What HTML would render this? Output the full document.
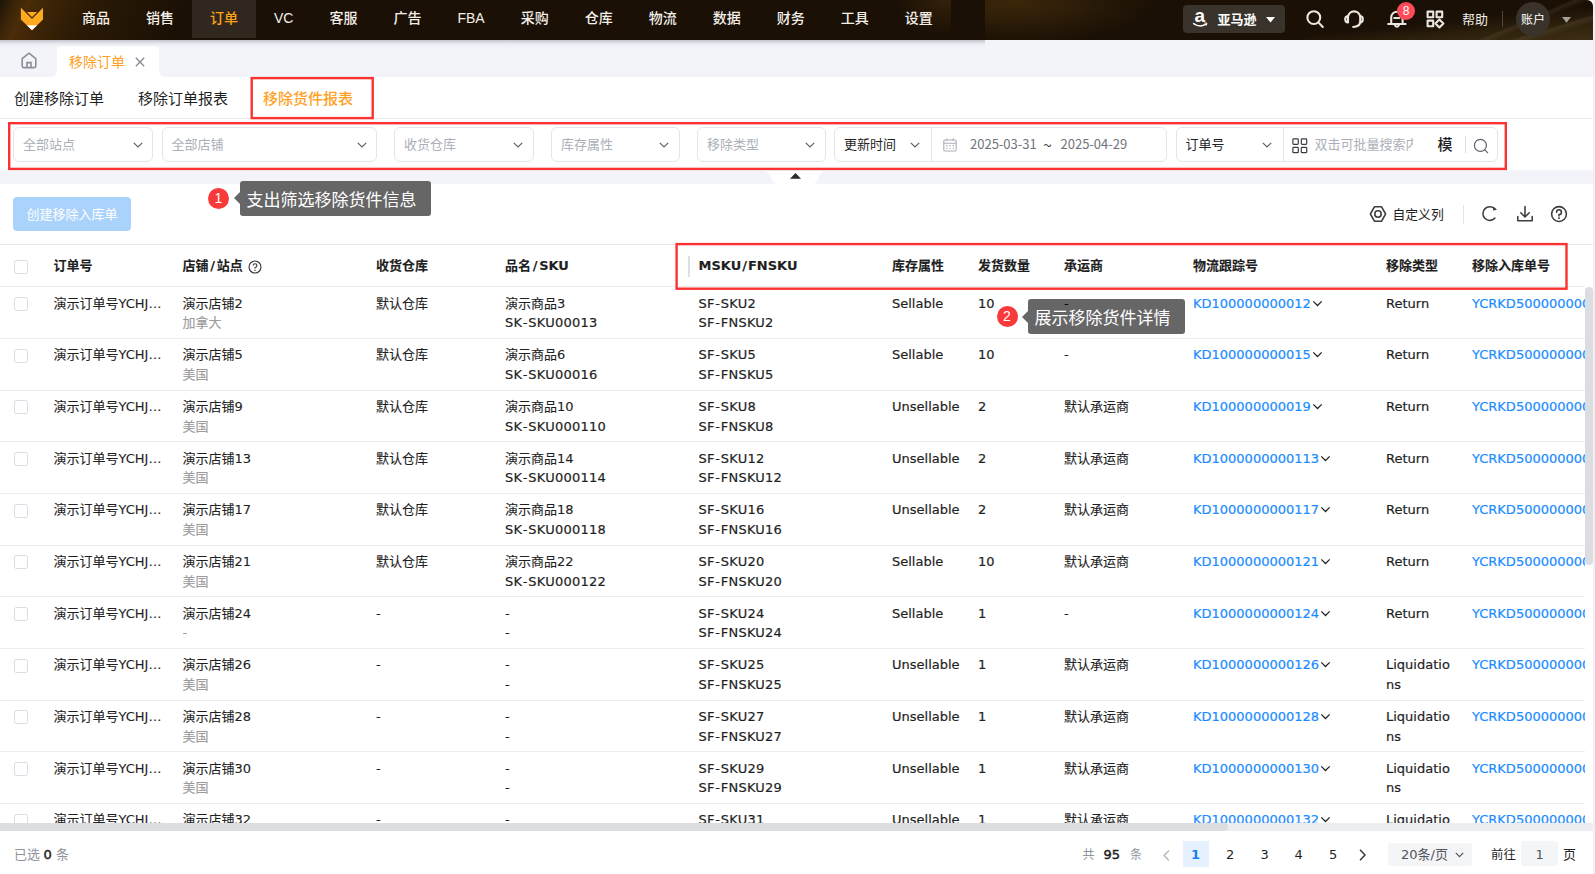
<!DOCTYPE html>
<html lang="zh-CN">
<head>
<meta charset="utf-8">
<title>移除订单</title>
<style>
*{box-sizing:border-box;margin:0;padding:0}
html,body{width:1595px;height:874px;overflow:hidden;background:#f0f1f5}
body{position:relative;font-family:"Liberation Sans","Noto Sans CJK SC",sans-serif;font-size:13px;color:#1f1f1f}
#page{position:absolute;left:0;top:0;width:1593px;height:874px;background:#fff;overflow:hidden}
svg{display:block;position:absolute;overflow:visible}
/* header */
#hdr{position:absolute;left:0;top:0;width:1593px;height:40px;background:#1a1005;overflow:hidden;border-radius:0 6px 0 0}
#hdr .glowL{position:absolute;left:0;top:0;width:300px;height:40px;background:linear-gradient(115deg,#1c1409 0%,#3a2408 5%,#4a2d08 9%,#3c2406 16%,#2a1905 30%,#1a1005 60%)}
#hdr .glowM{position:absolute;left:985px;top:0;width:230px;height:40px;background:radial-gradient(ellipse 140px 42px at 28px 2px,#3c2609 0%,#311f09 35%,rgba(26,16,5,0) 100%)}
#hdr .glowN{position:absolute;left:880px;top:0;width:71px;height:40px;background:radial-gradient(ellipse 50px 36px at 66px 0,#33210a 0%,rgba(26,16,5,0) 100%)}
#hdr .glowR{position:absolute;left:1300px;top:0;width:293px;height:40px;background:linear-gradient(157deg,rgba(0,0,0,0) 70%,rgba(120,100,70,.22) 71.5%,rgba(0,0,0,0) 75%),linear-gradient(163deg,rgba(0,0,0,0) 80%,rgba(120,100,70,.25) 82%,rgba(0,0,0,0) 87%),linear-gradient(174deg,rgba(26,16,5,0) 52%,#2e210d 74%,#3d2e15 100%)}
#nav{position:absolute;left:64px;top:0;height:40px;display:flex;font-size:14px;font-weight:500;color:#f3efe9;width:921px}
#nav span{display:block;height:38px;line-height:37px;padding:0 18px;white-space:nowrap}
#nav span.on{background:#30281e;color:#ffa21a}
#navshadow{position:absolute;left:0;top:40px;width:985px;height:7px;background:linear-gradient(#c3c6ce,rgba(226,229,235,.6) 55%,rgba(236,238,243,0));border-radius:0 0 4px 0}
.hi{stroke:#ebe7e1;fill:none;stroke-width:2.1;stroke-linecap:round;stroke-linejoin:round}
#amz{position:absolute;left:1183px;top:5px;width:102px;height:28px;background:#3a332b;border-radius:4px;color:#fff;font-weight:500;font-size:13px;line-height:27px}
#amz b{position:absolute;left:34.5px;top:0;font-family:"Noto Sans CJK SC",sans-serif}
#badge{position:absolute;left:1397px;top:1.5px;width:18px;height:18px;border-radius:9px;background:#ff4b59;color:#fff;font-size:12px;line-height:18px;text-align:center}
#help{position:absolute;left:1462px;top:10px;font-size:13px;line-height:18px;color:#f0ece6;font-family:"Noto Sans CJK SC",sans-serif}
#hdiv{position:absolute;left:1502px;top:11px;width:1px;height:16px;background:#4d463d}
#avatar{position:absolute;left:1516px;top:2px;width:34px;height:34px;border-radius:17px;background:#3a332c;color:#fff;font-size:12px;line-height:34px;text-align:center;font-family:"Noto Sans CJK SC",sans-serif}
/* tab bar */
#tabbar{position:absolute;left:0;top:40px;width:1593px;height:37px;background:#f2f4f9}
#homebg{display:none}
#tab1:before,#tab1:after{content:"";position:absolute;bottom:0;width:6px;height:6px;background:radial-gradient(circle 6px at 0 0,#f2f4f9 5.6px,#fff 6.2px)}
#tab1:before{left:-6px}
#tab1:after{right:-6px;background:radial-gradient(circle 6px at 6px 0,#f2f4f9 5.6px,#fff 6.2px)}
#tab1{position:absolute;left:57px;top:6px;width:102px;height:31px;background:#fff;border-radius:5px 5px 0 0;color:#ffa126;font-size:14px;line-height:30px;padding-left:12px;font-family:"Noto Sans CJK SC",sans-serif}
/* sub tabs */
#subtabs{position:absolute;left:0;top:77px;width:1593px;height:42px;background:#fff;border-bottom:1px solid #ebedf1;font-size:15px;font-family:"Noto Sans CJK SC",sans-serif}
#subtabs span{position:absolute;top:0;line-height:41px;white-space:nowrap;color:#1f1f1f}
.redbox{position:absolute;border:2px solid #fa2d2d;pointer-events:none}
/* filter */
#filter{position:absolute;left:0;top:119px;width:1593px;height:51px;background:#fff;font-family:"Noto Sans CJK SC",sans-serif}
.sel{position:absolute;top:8px;height:35px;border:1px solid #e2e5eb;border-radius:6px;background:#fff;font-size:13px;line-height:32px;padding-left:9px;color:#abafb7;white-space:nowrap}
.sel.dk{color:#1f1f1f}
.sel svg.cv{top:13.5px;width:10px;height:6px}
.sel .dv{position:absolute;top:0;width:1px;height:33px;background:#e2e5eb}
#strip{position:absolute;left:0;top:170px;width:1593px;height:14px;background:#f2f4f9}
#trig{position:absolute;left:764px;top:1px;width:62px;height:13px}
/* toolbar */
#btn{position:absolute;left:13px;top:197px;width:118px;height:34px;border-radius:4px;background:#a9d3fb;color:#fff;font-size:13px;line-height:33px;text-align:center;font-family:"Noto Sans CJK SC",sans-serif}
.ti{stroke:#3d3d3d;fill:none;stroke-width:1.55;stroke-linecap:round;stroke-linejoin:round}
.anno{position:absolute;width:21px;height:21px;border-radius:11px;background:#f93a3a;color:#fff;font-size:14px;line-height:21px;text-align:center}
.tip{position:absolute;height:35px;background:#666;border-radius:3px;color:#fff;font-size:17px;line-height:35px;padding-left:6.4px;white-space:nowrap;font-family:"Noto Sans CJK SC",sans-serif}
.tip:before{content:"";position:absolute;left:-6px;top:11.5px;border:6px solid transparent;border-left-width:0;border-right-color:#666}
/* table */
#tbl{position:absolute;left:0;top:244px;width:1585px;height:579px;overflow:hidden;border-top:1px solid #e6e8ee;font-family:"DejaVu Sans","Noto Sans CJK SC",sans-serif;font-size:13px;background:#fff}
.row{position:absolute;left:0;width:1585px;height:51.67px;border-top:1px solid #ebedf0}
.row.h{height:41px;font-weight:bold;top:0;border-top:0}
.c{position:absolute;top:6.4px;line-height:19.5px;white-space:nowrap;-webkit-text-stroke:.12px currentColor}
.row.h .c{top:11.4px}
u{text-decoration:none;padding:0 1.7px}
u.n{padding:0 1px}
s{text-decoration:none;padding:0 .6px}
.la{-webkit-text-stroke:.2px currentColor}
.sk{letter-spacing:.22px}
.el{overflow:hidden;text-overflow:ellipsis}
.wr{white-space:normal;word-break:break-all}
.g{color:#9b9b9b}
.lk{color:#1a8cff}
.cb{position:absolute;left:14px;width:14px;height:14px;border:1.5px solid #d9dce4;border-radius:2.5px;background:#fff}
svg.tc{position:static;display:inline-block;width:11px;height:7px;margin-left:1px;vertical-align:1px}
/* footer */
#hsb{position:absolute;left:0;top:823px;width:1593px;height:8px;background:#eceef2}
#hsb i{position:absolute;left:0;top:0;width:1228px;height:8px;border-radius:0 4px 4px 0;background:#dcdde1}
#vsb{position:absolute;left:1585px;top:287px;width:8px;height:278px;border-radius:4px;background:#dcdde1}
#foot{position:absolute;left:0;top:831px;width:1593px;height:43px;background:#fff;font-family:"DejaVu Sans","Noto Sans CJK SC",sans-serif;font-size:13px}
#foot span{position:absolute;top:14px;line-height:20px;white-space:nowrap}
.gy{color:#8f939b}
.bd{-webkit-text-stroke:.45px currentColor}
</style>
</head>
<body>
<div id="page">
<div id="hdr">
<div class="glowL"></div><div class="glowM"></div><div class="glowN"></div><div class="glowR"></div>
<svg style="left:0;top:0" width="64" height="40" viewBox="0 0 64 40"><polygon points="20.9,7.8 32,19.1 43,7.8 43,19.4 32,30.2 20.9,19.4" fill="#ffa921"/><polygon points="27,12.1 37,12.1 32,17.2" fill="#ffa921"/><polygon points="26.9,25.3 37.1,25.3 32,30.3" fill="#fff"/></svg>
<div id="nav"><span>商品</span><span>销售</span><span class="on">订单</span><span>VC</span><span>客服</span><span>广告</span><span>FBA</span><span>采购</span><span>仓库</span><span>物流</span><span>数据</span><span>财务</span><span>工具</span><span>设置</span></div>
<div id="amz"><svg style="left:10px;top:4px" width="16" height="20" viewBox="0 0 16 20"><text x="1.4" y="12.7" font-family="Liberation Sans,sans-serif" font-weight="bold" font-size="19" fill="#fff">a</text><path d="M0.6 14.6 Q6.6 18.8 12.6 15.4" stroke="#fff" stroke-width="1.5" fill="none" stroke-linecap="round"/><path d="M11.4 14 L14 14.2 L13.2 16.6" stroke="#fff" stroke-width="1" fill="none"/></svg><b>亚马逊</b><svg style="left:83px;top:11.5px" width="9" height="6" viewBox="0 0 9 6"><polygon points="0,0 9,0 4.5,5.6" fill="#fff"/></svg></div>
<svg style="left:1300px;top:5.5px" width="30" height="28" viewBox="0 0 30 28"><circle class="hi" cx="13.8" cy="11.6" r="6.4"/><path class="hi" d="M18.6 16.6 L22.8 21"/></svg>
<svg style="left:1340px;top:6px" width="30" height="28" viewBox="0 0 30 28"><path class="hi" d="M8 10.5 A6.2 6.2 0 0 1 20.2 10.5 L20.2 16 Q19.6 20.6 13.2 21"/><path class="hi" d="M8 10 Q5.2 10.4 5.2 13.2 Q5.2 16.2 8 16.4 Z"/><path class="hi" d="M20.2 10 Q22.8 10.4 22.8 13.2 Q22.8 16.2 20.2 16.4"/></svg>
<svg style="left:1383px;top:6px" width="30" height="28" viewBox="0 0 30 28"><path class="hi" d="M5.2 18 L22.6 18 M8.2 18 L8.2 11.4 A5.7 5.7 0 0 1 19.6 11.4 L19.6 18 M11.2 12 L16.4 12"/><path class="hi" d="M11.8 19 Q13.9 22.6 16 19"/></svg>
<div id="badge">8</div>
<svg style="left:1426px;top:10px" width="19" height="19" viewBox="0 0 19 19"><rect class="hi" x="1.6" y="1.6" width="5.6" height="5.6"/><rect class="hi" x="10.6" y="1.6" width="5.6" height="5.6"/><rect class="hi" x="1.6" y="10.6" width="5.6" height="5.6"/><path class="hi" d="M13.4 9.4 L17.4 13.4 L13.4 17.4 L9.4 13.4 Z"/></svg>
<div id="help">帮助</div><div id="hdiv"></div>
<div id="avatar">账户</div>
<svg style="left:1561.5px;top:16.5px" width="9" height="6" viewBox="0 0 9 6"><polygon points="0,0 9,0 4.5,5.8" fill="#a6a29c"/></svg>
</div>
<div id="tabbar"><div id="homebg"></div>
<svg style="left:21px;top:12px" width="16" height="17" viewBox="0 0 16 17"><path d="M1.2 6.6 L8 1.2 L14.8 6.6 L14.8 14 Q14.8 15.6 13.2 15.6 L2.8 15.6 Q1.2 15.6 1.2 14 Z" fill="none" stroke="#8a8e96" stroke-width="1.6" stroke-linejoin="round"/><path d="M6 15.4 L6 10.6 L10 10.6 L10 15.4" fill="none" stroke="#8a8e96" stroke-width="1.6"/></svg>
<div id="tab1">移除订单<svg style="left:77.5px;top:10.5px" width="10" height="10" viewBox="0 0 10 10"><path d="M0.8 0.8 L9.2 9.2 M9.2 0.8 L0.8 9.2" stroke="#858990" stroke-width="1.3" fill="none"/></svg></div></div>
<div id="navshadow"></div>
<div id="subtabs"><span style="left:14px">创建移除订单</span><span style="left:138px">移除订单报表</span><span style="left:263px;color:#ffa126;font-weight:500">移除货件报表</span></div>
<div id="filter">
<div class="sel" style="left:13px;width:140px">全部站点<svg class="cv" style="left:119px" viewBox="0 0 10 6"><path d="M0.8 0.8 L5 5 L9.2 0.8" fill="none" stroke="#5d6169" stroke-width="1.2"/></svg></div>
<div class="sel" style="left:161.5px;width:215px">全部店铺<svg class="cv" style="left:194px" viewBox="0 0 10 6"><path d="M0.8 0.8 L5 5 L9.2 0.8" fill="none" stroke="#5d6169" stroke-width="1.2"/></svg></div>
<div class="sel" style="left:394px;width:139.5px">收货仓库<svg class="cv" style="left:118px" viewBox="0 0 10 6"><path d="M0.8 0.8 L5 5 L9.2 0.8" fill="none" stroke="#5d6169" stroke-width="1.2"/></svg></div>
<div class="sel" style="left:551px;width:128.5px">库存属性<svg class="cv" style="left:107px" viewBox="0 0 10 6"><path d="M0.8 0.8 L5 5 L9.2 0.8" fill="none" stroke="#5d6169" stroke-width="1.2"/></svg></div>
<div class="sel" style="left:697px;width:129px">移除类型<svg class="cv" style="left:107px" viewBox="0 0 10 6"><path d="M0.8 0.8 L5 5 L9.2 0.8" fill="none" stroke="#5d6169" stroke-width="1.2"/></svg></div>
<div class="sel dk" style="left:834px;width:333px">更新时间<svg class="cv" style="left:75px" viewBox="0 0 10 6"><path d="M0.8 0.8 L5 5 L9.2 0.8" fill="none" stroke="#5d6169" stroke-width="1.2"/></svg><i class="dv" style="left:96px"></i>
<svg style="left:108px;top:10px" width="14" height="14" viewBox="0 0 14 14"><rect x="0.8" y="2" width="12.4" height="11" rx="1.2" fill="none" stroke="#a9adb5" stroke-width="1.1"/><path d="M0.8 5.2 L13.2 5.2 M3.8 0.6 L3.8 3 M10.2 0.6 L10.2 3" stroke="#a9adb5" stroke-width="1.1" fill="none"/><path d="M3 7.6h1.4M6.3 7.6h1.4M9.6 7.6h1.4M3 10.2h1.4M6.3 10.2h1.4M9.6 10.2h1.4" stroke="#a9adb5" stroke-width="1.1"/></svg>
<span style="position:absolute;left:135px;top:0;color:#70747c">2025-03-31</span><span style="position:absolute;left:208px;top:0;color:#44484f;font-size:16px">~</span><span style="position:absolute;left:225.5px;top:0;color:#70747c">2025-04-29</span></div>
<div class="sel dk" style="left:1175.5px;width:322.5px">订单号<svg class="cv" style="left:85px" viewBox="0 0 10 6"><path d="M0.8 0.8 L5 5 L9.2 0.8" fill="none" stroke="#5d6169" stroke-width="1.2"/></svg><i class="dv" style="left:106px"></i>
<svg style="left:115px;top:9.5px" width="16" height="16" viewBox="0 0 16 16"><rect x="0.9" y="0.9" width="5.4" height="5.4" rx="0.8" fill="none" stroke="#3a3d44" stroke-width="1.2"/><rect x="9.3" y="0.9" width="5.4" height="5.4" rx="0.8" fill="none" stroke="#3a3d44" stroke-width="1.2"/><rect x="0.9" y="9.3" width="5.4" height="5.4" rx="0.8" fill="none" stroke="#3a3d44" stroke-width="1.2"/><rect x="9.3" y="9.3" width="5.4" height="5.4" rx="0.8" fill="none" stroke="#3a3d44" stroke-width="1.2"/></svg>
<span style="position:absolute;left:138px;top:0;width:98px;overflow:hidden;color:#abafb7">双击可批量搜索内容</span>
<span style="position:absolute;left:261px;top:0;font-size:15px;color:#1f1f1f;font-weight:500">模</span>
<i style="position:absolute;left:288.5px;top:8px;width:1px;height:17px;background:#dcdfe5"></i>
<svg style="left:296px;top:9.5px" width="16" height="16" viewBox="0 0 16 16"><circle cx="7.4" cy="7.4" r="6" fill="none" stroke="#5d6169" stroke-width="1.2"/><path d="M11.8 11.8 L14.6 14.6" stroke="#5d6169" stroke-width="1.2" fill="none" stroke-linecap="round"/></svg></div>
</div>
<div id="strip"><div id="trig"><svg style="left:0;top:0" width="62" height="13" viewBox="0 0 62 13"><path d="M0 0 L62 0 Q56 1 54.5 7 Q53 13 48 13 L14 13 Q9 13 7.5 7 Q6 1 0 0 Z" fill="#fff"/></svg><svg style="left:26px;top:2px" width="11" height="6" viewBox="0 0 11 6"><polygon points="0,5.8 11,5.8 5.5,0" fill="#2b2b2b"/></svg></div></div>
<div id="btn">创建移除入库单</div>
<div class="anno" style="left:208px;top:187.5px">1</div>
<div class="tip" style="left:240px;top:180.5px;width:191px">支出筛选移除货件信息</div>
<!-- toolbar icons -->
<svg style="left:1369px;top:205px" width="18" height="18" viewBox="0 0 18 18"><path class="ti" d="M5.4 1.8 L12.6 1.8 L16.6 9 L12.6 16.2 L5.4 16.2 L1.4 9 Z"/><circle class="ti" cx="9" cy="9" r="3.2"/></svg>
<div style="position:absolute;left:1392.5px;top:204px;line-height:20px;font-size:12.8px;font-family:'Noto Sans CJK SC',sans-serif;color:#1f1f1f">自定义列</div>
<div style="position:absolute;left:1463px;top:205px;width:1px;height:19px;background:#e2e5ea"></div>
<svg style="left:1481px;top:205px" width="18" height="18" viewBox="0 0 18 18"><path class="ti" d="M13.9 4.2 A6.8 6.8 0 1 0 13.9 13"/><polygon points="12.4,1.6 16,4.8 12,5.6" fill="#3d3d3d"/></svg>
<svg style="left:1516px;top:205px" width="18" height="18" viewBox="0 0 18 18"><path class="ti" d="M9 1.6 L9 11.8 M4.8 7.8 L9 12 L13.2 7.8 M1.8 11.6 L1.8 15.8 L16.2 15.8 L16.2 11.6"/></svg>
<svg style="left:1550px;top:205px" width="18" height="18" viewBox="0 0 18 18"><circle class="ti" cx="9" cy="9" r="7.4"/><path class="ti" d="M6.6 7.2 A2.4 2.4 0 1 1 9 9.6 L9 11"/><circle cx="9" cy="13.2" r="0.9" fill="#2a2a2a"/></svg>
<!-- table -->
<div style="position:absolute;left:0;top:244px;width:1593px;height:1px;background:#e6e8ee"></div>
<div id="tbl">
<div class="row h"><i class="cb" style="top:14.7px"></i>
<div class="c" style="left:53.5px">订单号</div>
<div class="c" style="left:182.5px">店铺<u>/</u>站点<svg style="left:65px;top:3.5px" width="14" height="14" viewBox="0 0 14 14"><circle cx="7" cy="7" r="6" fill="none" stroke="#333" stroke-width="1.1"/><path d="M5.1 5.6 A1.9 1.9 0 1 1 7 7.5 L7 8.6" fill="none" stroke="#333" stroke-width="1.1"/><circle cx="7" cy="10.3" r="0.7" fill="#333"/></svg></div>
<div class="c" style="left:376px">收货仓库</div>
<div class="c" style="left:505px">品名<u>/</u>SKU</div>
<i style="position:absolute;left:688px;top:11px;width:2px;height:21px;background:#dcdfe6"></i>
<div class="c" style="left:698.5px">MSKU<u class="n">/</u>FNSKU</div>
<div class="c" style="left:892px">库存属性</div>
<div class="c" style="left:978px">发货数量</div>
<div class="c" style="left:1064px">承运商</div>
<div class="c" style="left:1193px">物流跟踪号</div>
<div class="c" style="left:1386px">移除类型</div>
<div class="c" style="left:1472px">移除入库单号</div>
</div>
<div class="row" style="top:41.30px"><i class="cb" style="top:9.6px"></i><div class="c el" style="left:53.5px;width:108px">演示订单号YCHJ202504001</div><div class="c" style="left:182.5px">演示店铺2<br><span class="g">加拿大</span></div><div class="c" style="left:376px">默认仓库</div><div class="c" style="left:505px">演示商品3<br><span class="la sk">SK<s>-</s>SKU00013</span></div><div class="c la sk" style="left:698.5px">SF<s>-</s>SKU2<br>SF<s>-</s>FNSKU2</div><div class="c la" style="left:892px">Sellable</div><div class="c la" style="left:978px">10</div><div class="c" style="left:1064px">-</div><div class="c lk la" style="left:1193px">KD100000000012<svg class="tc" viewBox="0 0 12 8"><path d="M1.2 1.5 L6 6.3 L10.8 1.5" fill="none" stroke="#222" stroke-width="1.4"/></svg></div><div class="c wr la" style="left:1386px;width:66px">Return</div><div class="c lk la" style="left:1472px">YCRKD500000000012</div></div>
<div class="row" style="top:92.97px"><i class="cb" style="top:9.6px"></i><div class="c el" style="left:53.5px;width:108px">演示订单号YCHJ202504002</div><div class="c" style="left:182.5px">演示店铺5<br><span class="g">美国</span></div><div class="c" style="left:376px">默认仓库</div><div class="c" style="left:505px">演示商品6<br><span class="la sk">SK<s>-</s>SKU00016</span></div><div class="c la sk" style="left:698.5px">SF<s>-</s>SKU5<br>SF<s>-</s>FNSKU5</div><div class="c la" style="left:892px">Sellable</div><div class="c la" style="left:978px">10</div><div class="c" style="left:1064px">-</div><div class="c lk la" style="left:1193px">KD100000000015<svg class="tc" viewBox="0 0 12 8"><path d="M1.2 1.5 L6 6.3 L10.8 1.5" fill="none" stroke="#222" stroke-width="1.4"/></svg></div><div class="c wr la" style="left:1386px;width:66px">Return</div><div class="c lk la" style="left:1472px">YCRKD500000000015</div></div>
<div class="row" style="top:144.64px"><i class="cb" style="top:9.6px"></i><div class="c el" style="left:53.5px;width:108px">演示订单号YCHJ202504003</div><div class="c" style="left:182.5px">演示店铺9<br><span class="g">美国</span></div><div class="c" style="left:376px">默认仓库</div><div class="c" style="left:505px">演示商品10<br><span class="la sk">SK<s>-</s>SKU000110</span></div><div class="c la sk" style="left:698.5px">SF<s>-</s>SKU8<br>SF<s>-</s>FNSKU8</div><div class="c la" style="left:892px">Unsellable</div><div class="c la" style="left:978px">2</div><div class="c" style="left:1064px">默认承运商</div><div class="c lk la" style="left:1193px">KD100000000019<svg class="tc" viewBox="0 0 12 8"><path d="M1.2 1.5 L6 6.3 L10.8 1.5" fill="none" stroke="#222" stroke-width="1.4"/></svg></div><div class="c wr la" style="left:1386px;width:66px">Return</div><div class="c lk la" style="left:1472px">YCRKD500000000019</div></div>
<div class="row" style="top:196.31px"><i class="cb" style="top:9.6px"></i><div class="c el" style="left:53.5px;width:108px">演示订单号YCHJ202504004</div><div class="c" style="left:182.5px">演示店铺13<br><span class="g">美国</span></div><div class="c" style="left:376px">默认仓库</div><div class="c" style="left:505px">演示商品14<br><span class="la sk">SK<s>-</s>SKU000114</span></div><div class="c la sk" style="left:698.5px">SF<s>-</s>SKU12<br>SF<s>-</s>FNSKU12</div><div class="c la" style="left:892px">Unsellable</div><div class="c la" style="left:978px">2</div><div class="c" style="left:1064px">默认承运商</div><div class="c lk la" style="left:1193px">KD1000000000113<svg class="tc" viewBox="0 0 12 8"><path d="M1.2 1.5 L6 6.3 L10.8 1.5" fill="none" stroke="#222" stroke-width="1.4"/></svg></div><div class="c wr la" style="left:1386px;width:66px">Return</div><div class="c lk la" style="left:1472px">YCRKD5000000000113</div></div>
<div class="row" style="top:247.98px"><i class="cb" style="top:9.6px"></i><div class="c el" style="left:53.5px;width:108px">演示订单号YCHJ202504005</div><div class="c" style="left:182.5px">演示店铺17<br><span class="g">美国</span></div><div class="c" style="left:376px">默认仓库</div><div class="c" style="left:505px">演示商品18<br><span class="la sk">SK<s>-</s>SKU000118</span></div><div class="c la sk" style="left:698.5px">SF<s>-</s>SKU16<br>SF<s>-</s>FNSKU16</div><div class="c la" style="left:892px">Unsellable</div><div class="c la" style="left:978px">2</div><div class="c" style="left:1064px">默认承运商</div><div class="c lk la" style="left:1193px">KD1000000000117<svg class="tc" viewBox="0 0 12 8"><path d="M1.2 1.5 L6 6.3 L10.8 1.5" fill="none" stroke="#222" stroke-width="1.4"/></svg></div><div class="c wr la" style="left:1386px;width:66px">Return</div><div class="c lk la" style="left:1472px">YCRKD5000000000117</div></div>
<div class="row" style="top:299.65px"><i class="cb" style="top:9.6px"></i><div class="c el" style="left:53.5px;width:108px">演示订单号YCHJ202504006</div><div class="c" style="left:182.5px">演示店铺21<br><span class="g">美国</span></div><div class="c" style="left:376px">默认仓库</div><div class="c" style="left:505px">演示商品22<br><span class="la sk">SK<s>-</s>SKU000122</span></div><div class="c la sk" style="left:698.5px">SF<s>-</s>SKU20<br>SF<s>-</s>FNSKU20</div><div class="c la" style="left:892px">Sellable</div><div class="c la" style="left:978px">10</div><div class="c" style="left:1064px">默认承运商</div><div class="c lk la" style="left:1193px">KD1000000000121<svg class="tc" viewBox="0 0 12 8"><path d="M1.2 1.5 L6 6.3 L10.8 1.5" fill="none" stroke="#222" stroke-width="1.4"/></svg></div><div class="c wr la" style="left:1386px;width:66px">Return</div><div class="c lk la" style="left:1472px">YCRKD5000000000121</div></div>
<div class="row" style="top:351.32px"><i class="cb" style="top:9.6px"></i><div class="c el" style="left:53.5px;width:108px">演示订单号YCHJ202504007</div><div class="c" style="left:182.5px">演示店铺24<br><span class="g">-</span></div><div class="c" style="left:376px">-</div><div class="c" style="left:505px">-<br><span class="la sk">-</span></div><div class="c la sk" style="left:698.5px">SF<s>-</s>SKU24<br>SF<s>-</s>FNSKU24</div><div class="c la" style="left:892px">Sellable</div><div class="c la" style="left:978px">1</div><div class="c" style="left:1064px">-</div><div class="c lk la" style="left:1193px">KD1000000000124<svg class="tc" viewBox="0 0 12 8"><path d="M1.2 1.5 L6 6.3 L10.8 1.5" fill="none" stroke="#222" stroke-width="1.4"/></svg></div><div class="c wr la" style="left:1386px;width:66px">Return</div><div class="c lk la" style="left:1472px">YCRKD5000000000124</div></div>
<div class="row" style="top:402.99px"><i class="cb" style="top:9.6px"></i><div class="c el" style="left:53.5px;width:108px">演示订单号YCHJ202504008</div><div class="c" style="left:182.5px">演示店铺26<br><span class="g">美国</span></div><div class="c" style="left:376px">-</div><div class="c" style="left:505px">-<br><span class="la sk">-</span></div><div class="c la sk" style="left:698.5px">SF<s>-</s>SKU25<br>SF<s>-</s>FNSKU25</div><div class="c la" style="left:892px">Unsellable</div><div class="c la" style="left:978px">1</div><div class="c" style="left:1064px">默认承运商</div><div class="c lk la" style="left:1193px">KD1000000000126<svg class="tc" viewBox="0 0 12 8"><path d="M1.2 1.5 L6 6.3 L10.8 1.5" fill="none" stroke="#222" stroke-width="1.4"/></svg></div><div class="c wr la" style="left:1386px;width:66px">Liquidations</div><div class="c lk la" style="left:1472px">YCRKD5000000000126</div></div>
<div class="row" style="top:454.66px"><i class="cb" style="top:9.6px"></i><div class="c el" style="left:53.5px;width:108px">演示订单号YCHJ202504009</div><div class="c" style="left:182.5px">演示店铺28<br><span class="g">美国</span></div><div class="c" style="left:376px">-</div><div class="c" style="left:505px">-<br><span class="la sk">-</span></div><div class="c la sk" style="left:698.5px">SF<s>-</s>SKU27<br>SF<s>-</s>FNSKU27</div><div class="c la" style="left:892px">Unsellable</div><div class="c la" style="left:978px">1</div><div class="c" style="left:1064px">默认承运商</div><div class="c lk la" style="left:1193px">KD1000000000128<svg class="tc" viewBox="0 0 12 8"><path d="M1.2 1.5 L6 6.3 L10.8 1.5" fill="none" stroke="#222" stroke-width="1.4"/></svg></div><div class="c wr la" style="left:1386px;width:66px">Liquidations</div><div class="c lk la" style="left:1472px">YCRKD5000000000128</div></div>
<div class="row" style="top:506.33px"><i class="cb" style="top:9.6px"></i><div class="c el" style="left:53.5px;width:108px">演示订单号YCHJ202504010</div><div class="c" style="left:182.5px">演示店铺30<br><span class="g">美国</span></div><div class="c" style="left:376px">-</div><div class="c" style="left:505px">-<br><span class="la sk">-</span></div><div class="c la sk" style="left:698.5px">SF<s>-</s>SKU29<br>SF<s>-</s>FNSKU29</div><div class="c la" style="left:892px">Unsellable</div><div class="c la" style="left:978px">1</div><div class="c" style="left:1064px">默认承运商</div><div class="c lk la" style="left:1193px">KD1000000000130<svg class="tc" viewBox="0 0 12 8"><path d="M1.2 1.5 L6 6.3 L10.8 1.5" fill="none" stroke="#222" stroke-width="1.4"/></svg></div><div class="c wr la" style="left:1386px;width:66px">Liquidations</div><div class="c lk la" style="left:1472px">YCRKD5000000000130</div></div>
<div class="row" style="top:558.00px"><i class="cb" style="top:9.6px"></i><div class="c el" style="left:53.5px;width:108px">演示订单号YCHJ202504011</div><div class="c" style="left:182.5px">演示店铺32<br><span class="g">美国</span></div><div class="c" style="left:376px">-</div><div class="c" style="left:505px">-<br><span class="la sk">-</span></div><div class="c la sk" style="left:698.5px">SF<s>-</s>SKU31<br>SF<s>-</s>FNSKU31</div><div class="c la" style="left:892px">Unsellable</div><div class="c la" style="left:978px">1</div><div class="c" style="left:1064px">默认承运商</div><div class="c lk la" style="left:1193px">KD1000000000132<svg class="tc" viewBox="0 0 12 8"><path d="M1.2 1.5 L6 6.3 L10.8 1.5" fill="none" stroke="#222" stroke-width="1.4"/></svg></div><div class="c wr la" style="left:1386px;width:66px">Liquidations</div><div class="c lk la" style="left:1472px">YCRKD5000000000132</div></div>
</div>
<svg style="left:0;top:0;pointer-events:none" width="1593" height="874" viewBox="0 0 1593 874"><g fill="none" stroke="#fc3232" stroke-width="2.4"><rect x="251.7" y="78.1" width="121" height="40"/><rect x="9.2" y="123.2" width="1496.6" height="45.7"/><rect x="676.6" y="244.1" width="889.9" height="44.6"/></g></svg>
<div class="anno" style="left:996.5px;top:306px">2</div>
<div class="tip" style="left:1028px;top:299px;width:157px;background:rgba(0,0,0,.6)">展示移除货件详情</div>
<div id="vsb"></div>
<div id="hsb"><i></i></div>
<div id="foot">
<span class="gy" style="left:14px">已选</span><span class="bd" style="left:43.5px">0</span><span class="gy" style="left:56px">条</span>
<span class="gy" style="left:1082.5px;font-size:12px">共</span><span class="bd" style="left:1103.5px">95</span><span class="gy" style="left:1130px;font-size:12px">条</span>
<svg style="left:1162.5px;top:18.5px" width="7" height="11" viewBox="0 0 7 11"><path d="M6 0.6 L1 5.5 L6 10.4" fill="none" stroke="#b4b8c0" stroke-width="1.4"/></svg>
<i style="position:absolute;left:1183px;top:10px;width:26px;height:25.5px;background:#e6f1ff"></i>
<span style="left:1191px;color:#1a7ff0;font-weight:bold">1</span>
<span style="left:1226px">2</span><span style="left:1260.5px">3</span><span style="left:1294.5px">4</span><span style="left:1329px">5</span>
<svg style="left:1359px;top:18px" width="7" height="12" viewBox="0 0 7 12"><path d="M1 0.8 L6 6 L1 11.2" fill="none" stroke="#333" stroke-width="1.4"/></svg>
<i style="position:absolute;left:1387.5px;top:12px;width:84.5px;height:23px;border-radius:3px;background:#f4f5f7"></i>
<span style="left:1401px;color:#50545c">20条/页</span>
<svg style="left:1455px;top:21px" width="9" height="6" viewBox="0 0 9 6"><path d="M0.8 0.8 L4.5 4.6 L8.2 0.8" fill="none" stroke="#50545c" stroke-width="1.2"/></svg>
<span style="left:1491px;font-size:12.4px">前往</span>
<i style="position:absolute;left:1521px;top:10px;width:37px;height:25px;border-radius:3px;background:#f4f5f7"></i>
<span style="left:1535.5px;color:#50545c">1</span>
<span style="left:1563px">页</span>
</div>
</div>
</body>
</html>
